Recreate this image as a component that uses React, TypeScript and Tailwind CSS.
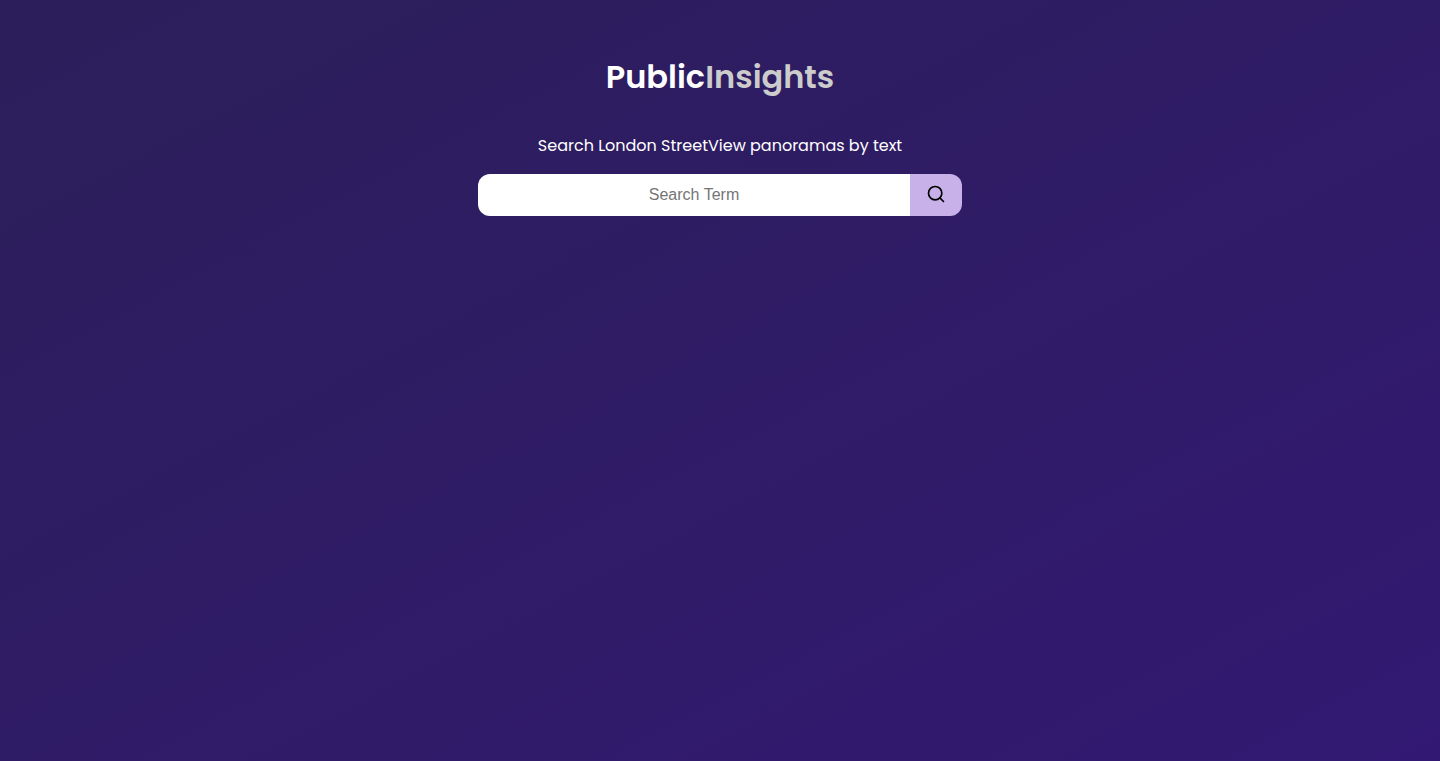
import { useState } from 'react';
import { Search } from 'lucide-react';

export default function App() {
  const [term, setTerm] = useState('');

  return (
    <div className="min-h-screen bg-linear-to-br from-[#2c1e5a] to-[#321872] text-white text-center font-['Poppins','Inter',sans-serif]">
      <header className="pt-13">
        <h1 className="text-[32px] leading-[50px] font-semibold">
          Public<span className="text-[#cccccc]">Insights</span>
        </h1>
      </header>

      <main className="mt-8 flex flex-col items-center px-4">
        <label htmlFor="search-term" className="text-base leading-6">
          Search London StreetView panoramas by text
        </label>
        <form
          className="mt-4 flex h-[42px] w-full max-w-[484px] overflow-hidden rounded-xl"
          onSubmit={(e) => e.preventDefault()}
        >
          <input
            id="search-term"
            type="text"
            value={term}
            onChange={(e) => setTerm(e.target.value)}
            placeholder="Search Term"
            className="min-w-0 flex-1 bg-white text-center text-base text-black outline-none placeholder:text-[#757575] font-['Liberation_Sans',Arial,sans-serif]"
          />
          <button
            type="submit"
            aria-label="Search"
            className="flex w-[52px] items-start justify-center bg-[#c8b1e8] pt-2.5 text-black"
          >
            <Search className="size-5" />
          </button>
        </form>
      </main>
    </div>
  );
}
